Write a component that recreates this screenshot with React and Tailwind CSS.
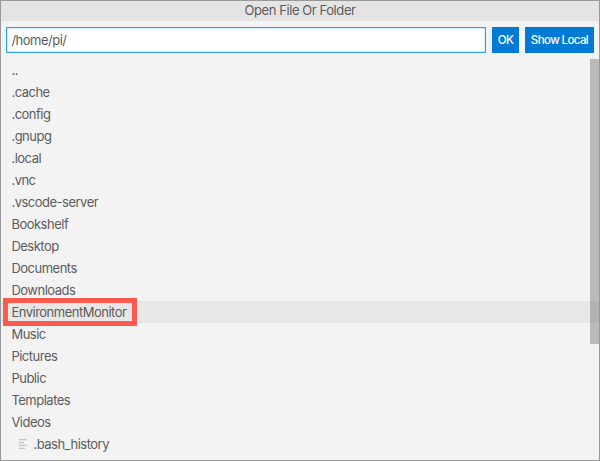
const folders = [
  '..', '.cache', '.config', '.gnupg', '.local', '.vnc', '.vscode-server',
  'Bookshelf', 'Desktop', 'Documents', 'Downloads', 'EnvironmentMonitor',
  'Music', 'Pictures', 'Public', 'Templates', 'Videos',
];

function FileIcon() {
  return (
    <svg className="ml-[8px] mr-[6px] h-[10px] w-[8px] shrink-0" viewBox="0 0 8 10" stroke="#c6c6c6" strokeWidth="1.25">
      <path d="M0 .7H8M0 3.5H5M0 6.4H8M0 9.3H6" />
    </svg>
  );
}

function Row({ name, selected, file }) {
  return (
    <li className={`relative flex h-[22px] shrink-0 items-center pl-[10.4px] ${selected ? 'bg-[#e7e7e7]' : ''}`}>
      {file && <FileIcon />}
      <span className="whitespace-pre">{name}</span>
      {selected && (
        <div className="absolute -top-[3px] left-[2px] h-[28px] w-[134px] border-[5px] border-[#ff5a4d]" />
      )}
    </li>
  );
}

export default function App() {
  return (
    <div className="relative flex h-[461px] w-[600px] flex-col overflow-hidden border border-[#999999] bg-[#f3f3f3] font-['Inter',sans-serif] text-[13px] leading-[22px] tracking-[-0.5px] text-[#5c5c5c]">
      <header className="flex h-[20px] shrink-0 items-center justify-center bg-[#e4e4e4] pb-[2px] tracking-[-0.42px]">
        Open File Or Folder
      </header>
      <div className="flex h-[38px] shrink-0 gap-[6px] px-[5px] py-[6px]">
        <div className="flex w-[480px] items-center border border-[#2f9ff4] bg-white pl-[4.4px] shadow-[inset_0_0_0_1px_#d3ecff]">
          /home/pi/
        </div>
        <button className="w-[27px] bg-[#007ad4] text-[11.5px] font-medium tracking-[-0.6px] text-white">OK</button>
        <button className="w-[69px] whitespace-nowrap bg-[#007ad4] text-[11.5px] font-medium tracking-[-0.6px] text-white">Show Local</button>
      </div>
      <ul className="flex min-h-0 flex-1 flex-col">
        {folders.map((name) => (
          <Row key={name} name={name} selected={name === 'EnvironmentMonitor'} />
        ))}
        <Row name=".bash_history" file />
      </ul>
      <div className="absolute right-0 top-[58px] h-[285px] w-[9px] bg-[#646464]/40" />
    </div>
  );
}
